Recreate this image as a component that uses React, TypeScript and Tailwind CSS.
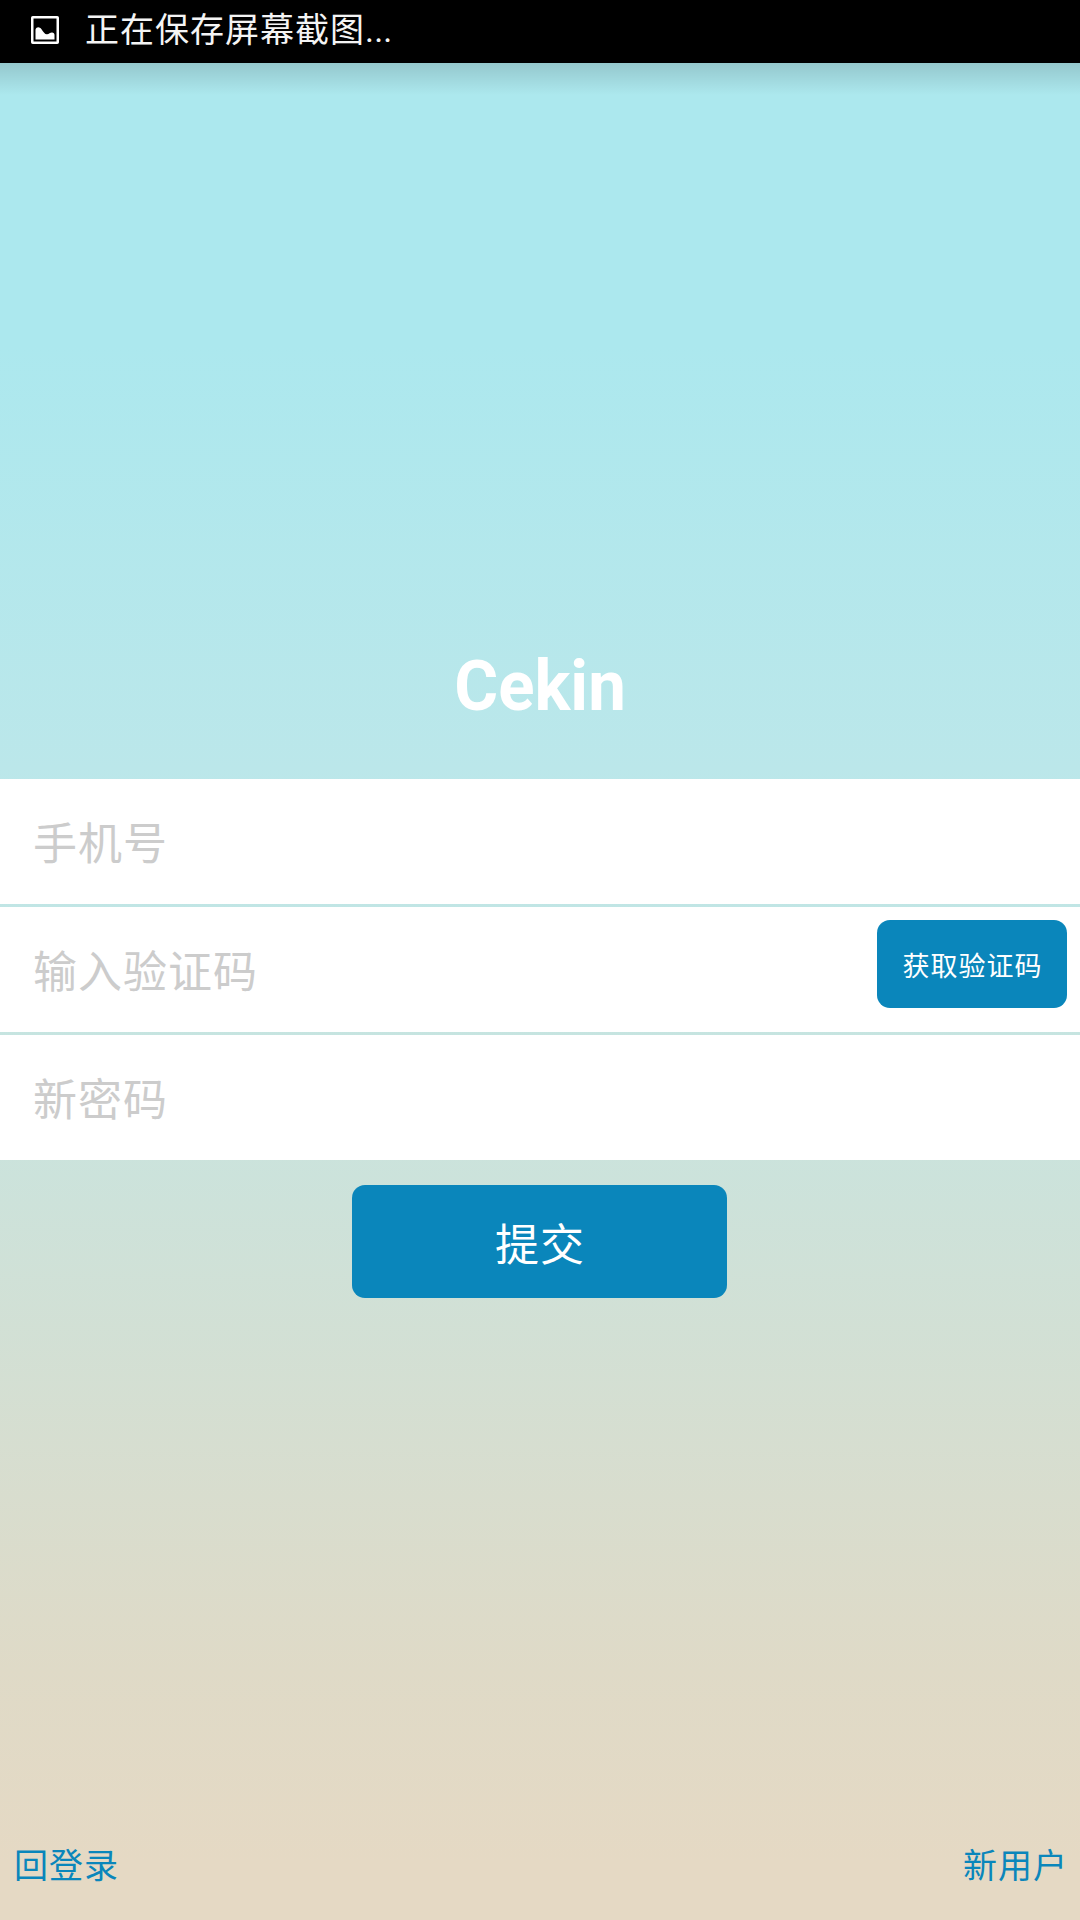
const fields = [
  { name: "phone", label: "手机号" },
  { name: "code", label: "输入验证码" },
  { name: "password", label: "新密码" },
];

function StatusBar() {
  return (
    <div className="flex h-[63px] shrink-0 items-start bg-black pl-[31px] text-[#f4f4f4]">
      <svg className="mt-[16px] h-[28px] w-[28px]" viewBox="0 0 28 28" fill="none">
        <rect x="1.25" y="1.25" width="25.5" height="25.5" rx="0.5" stroke="white" strokeWidth="2.5" />
        <path
          d="M4.5 23.5V13.5C5.5 10.5 8.5 10.5 10.5 13.2C12.5 16 14 18.5 16 18.3C18 18 19 16.4 21 16.4C22.6 16.4 23.5 17.5 23.5 19V23.5Z"
          fill="white"
        />
      </svg>
      <span className="ml-[26px] text-[34px] leading-[60px] tracking-[1px]">
        正在保存屏幕截图<span className="tracking-[0.2px]">...</span>
      </span>
    </div>
  );
}

export default function App() {
  return (
    <div className="flex h-[1920px] w-[1080px] flex-col overflow-hidden bg-[linear-gradient(to_bottom,#ace8ee_18%,#bbe7ea_40%,#cbe3dc_60%,#dfdac7_87%,#e5d9c4_97%)] font-['Roboto','Noto_Sans_CJK_SC',sans-serif]">
      <StatusBar />
      <div className="h-[32px] shrink-0 bg-linear-to-b from-black/14 to-transparent" />
      <h1 className="mt-[546px] h-[138px] scale-x-96 text-center text-[70px] leading-[90px] font-bold text-white">
        Cekin
      </h1>
      <form className="flex flex-col gap-[3px]">
        {fields.map((field) => (
          <div key={field.name} className="flex h-[125px] items-start justify-between bg-white pr-[13px] pl-[33px]">
            <span className="text-[44px] leading-[132px] tracking-[1px] text-[#cccccc]">{field.label}</span>
            {field.name === "code" && (
              <button
                type="button"
                className="mt-[13px] h-[88px] w-[190px] rounded-[13px] bg-[#0a86bb] pt-[7px] pl-px text-[27px] tracking-[1px] text-white"
              >
                获取验证码
              </button>
            )}
          </div>
        ))}
      </form>
      <button
        type="button"
        className="mt-[25px] mr-px h-[113px] w-[375px] self-center rounded-[13px] bg-[#0a86bb] pt-[9px] pl-px text-[44px] tracking-[1px] text-white"
      >
        提交
      </button>
      <div className="mt-auto flex justify-between pr-[12px] pb-[29px] pl-[14px] text-[34px] leading-[50px] tracking-[1px] text-[#0a86bb]">
        <span>回登录</span>
        <span>新用户</span>
      </div>
    </div>
  );
}
